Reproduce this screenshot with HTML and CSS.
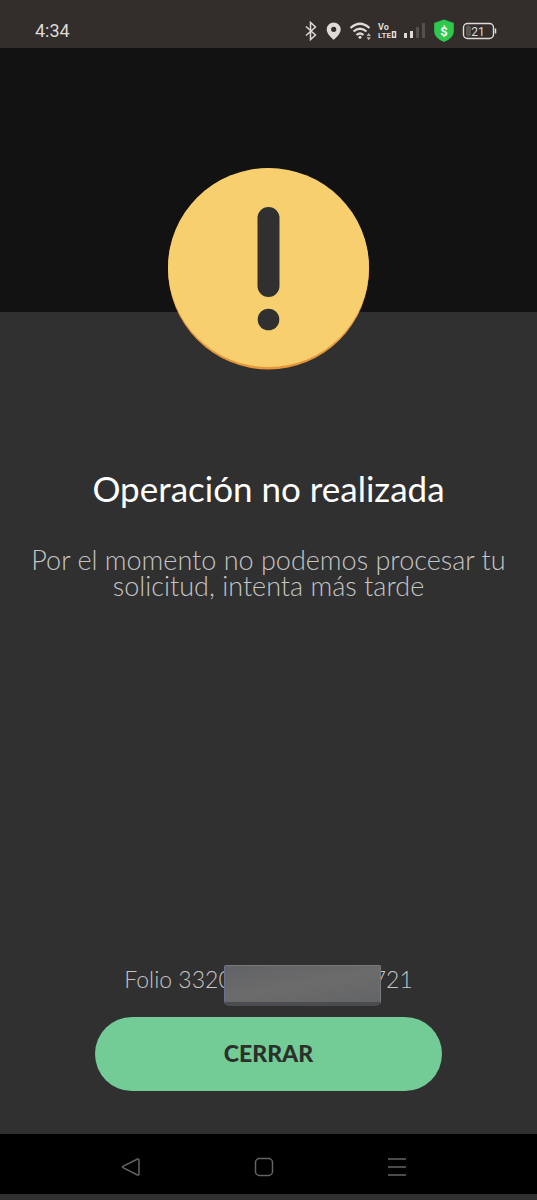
FILE: index.html
```html
<!DOCTYPE html>
<html lang="es">
<head>
<meta charset="utf-8">
<meta name="viewport" content="width=device-width, initial-scale=1">
<title>Operación no realizada</title>
<link rel="stylesheet" href="styles.css">
</head>
<body>
<header class="status">
  <time class="clock">4:34</time>
  <svg class="status-icons" width="194" height="26" viewBox="303 18 194 26" aria-hidden="true">
    <path d="M306 26.500l9.500 8.500-5 4.500V22.500l5 4.500-9.500 8.500" fill="none" stroke="#dedad6" stroke-width="1.500"/>
    <path fill="#dedad6" fill-rule="evenodd" d="M333.700 22.500a7 7 0 0 0-7 7c0 5 7 10.300 7 10.300s7-5.300 7-10.300a7 7 0 0 0-7-7zm0 4.200a2.600 2.600 0 1 1 0 5.200 2.600 2.600 0 0 1 0-5.200z"/>
    <g fill="none" stroke="#dedad6" stroke-width="2.200">
      <path d="M350.500 28q9.500-8.500 19 0M353.500 31.500q6.500-5.500 13 0M356.500 35q3.500-3 7 0"/>
    </g>
    <circle cx="360" cy="37.300" r="1.500" fill="#dedad6"/>
    <path fill="#bdb8b4" d="M366.500 36l2.200-3 2.200 3zM366.500 37.300l2.200 3 2.200-3z"/>
    <text class="volte" x="378" y="30">Vo</text>
    <text class="volte lte" x="378" y="38">LTE</text>
    <path d="M392.500 31.800h3v5.400h-3z" fill="none" stroke="#dedad6" stroke-width="1.500"/>
    <path fill="#dedad6" d="M404 33h3v5h-3zM410 31h3v7h-3z"/>
    <path fill="#55504c" d="M416 27h3v11h-3zM422 23h3v15h-3z"/>
    <path fill="#2dc84d" d="M444 19.500l9.800 3.500v8c0 5-4 8.500-9.800 11-5.800-2.500-9.800-6-9.800-11v-8z"/>
    <text class="dollar" x="444" y="35.500">$</text>
    <rect x="466" y="25.500" width="5" height="11" rx="2" fill="#5b5652"/>
    <rect x="463.500" y="23.500" width="30" height="15" rx="4" fill="none" stroke="#dedad6" stroke-width="1.400"/>
    <path d="M495.500 28.500v5" stroke="#dedad6" stroke-width="1.500"/>
    <text class="charge" x="478" y="35.500">21</text>
  </svg>
</header>
<main class="screen">
  <div class="hero">
    <svg class="alert" width="201" height="202" viewBox="0 0 201 202" role="img" aria-label="Advertencia">
      <circle cx="100.500" cy="101" r="100.500" fill="#e7973a"/>
      <ellipse cx="100.500" cy="99.500" rx="100.500" ry="99.500" fill="#f7cf6e"/>
      <rect x="89.500" y="39" width="22" height="90" rx="11" fill="#303030"/>
      <circle cx="100.500" cy="151.500" r="10.800" fill="#303030"/>
    </svg>
  </div>
  <section class="message">
    <h1 class="title">Operación no realizada</h1>
    <p class="detail">Por el momento no podemos procesar tu solicitud, intenta más tarde</p>
  </section>
  <footer class="actions">
    <p class="folio"><span>Folio 3320</span><span class="mask"></span><span>721</span></p>
    <button class="close" type="button">CERRAR</button>
  </footer>
</main>
<nav class="system-nav" aria-label="Sistema">
  <button class="nav-key" type="button" aria-label="Atrás"><svg width="20" height="20" viewBox="0 0 20 20"><path d="M2 9.300L16.500 2q1.500-.5 1.500 1v14q0 1.500-1.500 1L2 10.700q-1-.7 0-1.400z"/></svg></button>
  <button class="nav-key" type="button" aria-label="Inicio"><svg width="20" height="20" viewBox="0 0 20 20"><rect x="1.500" y="1.500" width="17" height="17" rx="4"/></svg></button>
  <button class="nav-key" type="button" aria-label="Recientes"><svg width="20" height="20" viewBox="0 0 20 20"><path d="M1 2h18M1 10h18M1 18h18"/></svg></button>
</nav>
</body>
</html>
```
FILE: styles.css
```css
* {
  box-sizing: border-box;
}

body {
  margin: 0;
  min-height: 100vh;
  display: flex;
  flex-direction: column;
  background: #303030;
  color: #fff;
  font-family: Lato, "Open Sans", sans-serif;
}

.status {
  display: flex;
  justify-content: space-between;
  align-items: center;
  padding: 18px 40px 4px 35px;
  background: #332e2b;
}

.clock {
  font: 18px/26px Roboto, sans-serif;
  color: #dedad6;
}

.status-icons text {
  font-family: Roboto, sans-serif;
  fill: #dedad6;
}

.status-icons .volte {
  font-size: 9px;
  font-weight: 700;
}

.status-icons .lte {
  font-size: 8px;
}

.status-icons .dollar {
  font-size: 13px;
  font-weight: 700;
  text-anchor: middle;
  fill: #fff;
}

.status-icons .charge {
  font-size: 12px;
  text-anchor: middle;
}

.screen {
  flex: 1;
  display: flex;
  flex-direction: column;
}

.hero {
  display: flex;
  justify-content: center;
  padding-top: 120px;
  background: #121212;
}

.alert {
  display: block;
  margin-bottom: -58px;
}

.message {
  flex: 1;
  padding: 155px 24px 24px;
  text-align: center;
}

.title {
  margin: 0 0 38px;
  font-size: 35px;
  line-height: 42px;
  font-weight: 400;
}

.detail {
  margin: 0;
  font-size: 27px;
  line-height: 26px;
  font-weight: 300;
  color: #c4c4c4;
}

.actions {
  padding: 0 95px 43px;
}

.folio {
  display: flex;
  justify-content: center;
  align-items: flex-start;
  margin: 0 0 11px;
  font-size: 23px;
  font-weight: 300;
  line-height: 28px;
  color: #c4c4c4;
}

.mask {
  z-index: 1;
  width: 157px;
  height: 41px;
  margin: 0 -8px;
  border: 1px solid #77787b;
  border-bottom: 4px solid #4b4c50;
  border-left-color: #687291;
  border-radius: 2px 2px 5px 5px;
  background: linear-gradient(170deg, #626366, #6b6b6b 50%, #646567);
}

.close {
  display: block;
  width: 100%;
  padding: 21px 22px 23px;
  border: 0;
  border-radius: 37px;
  background: #73cb96;
  color: #2b302b;
  font: 900 23px/30px Lato, "Open Sans", sans-serif;
}

.system-nav {
  display: flex;
  justify-content: center;
  gap: 113px;
  margin-bottom: 6px;
  padding: 20px 9px 20px 0;
  background: #000;
}

.nav-key {
  padding: 0;
  border: 0;
  background: none;
}

.nav-key svg {
  display: block;
  margin-top: 3px;
  margin-bottom: -3px;
  fill: none;
  stroke: #646464;
  stroke-width: 1.5;
}
```
